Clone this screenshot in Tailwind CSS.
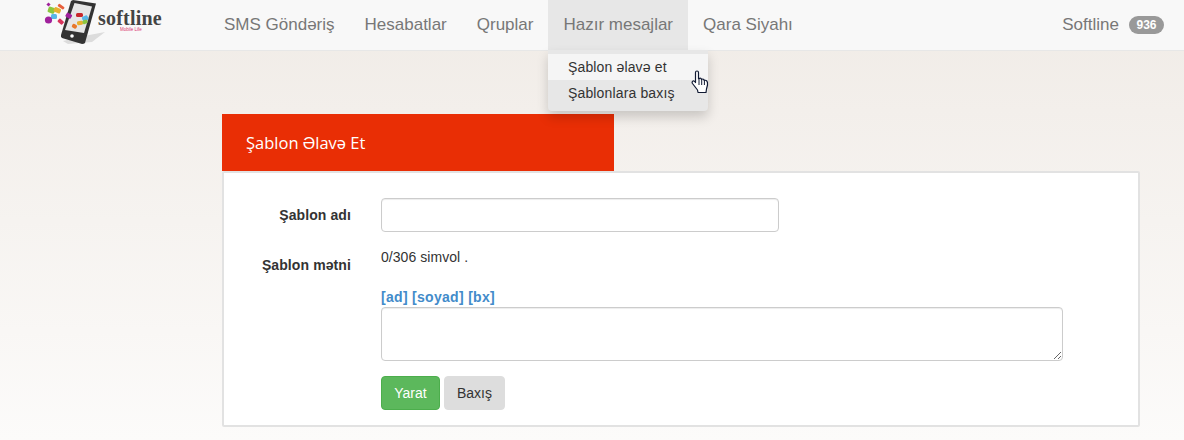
<!DOCTYPE html>
<html><head><meta charset="utf-8"><script src="https://cdn.jsdelivr.net/npm/@tailwindcss/browser@4"></script></head>
<body class="m-0 h-[440px] w-[1184px] overflow-hidden bg-gradient-to-b from-[#f0ebe6] to-[#fcfbfa] font-['Liberation_Sans',Arial,sans-serif] text-[14px] text-[#333]">
<nav class="relative z-10 flex h-[51px] items-stretch border-b border-[#e7e7e7] bg-[#f8f8f8] text-[17px] text-[#777]">
  <div class="relative w-[209px] shrink-0">
    <svg class="absolute left-[44px] top-0" width="62" height="46" viewBox="44 0 62 46">
      <path d="M63 41 L84 36 L105 32 L92 42 L68 44Z" fill="#dcdcdc"/>
      <path d="M73 0 L96 3.500 L85 43 Q84 44 82 44 L62 38 Q60.500 37 61 35 L71 1Z" fill="#333"/>
      <path d="M74.500 3 L92 6.500 L84 33 L65 30Z" fill="#e6e6e6"/>
      <circle cx="72" cy="36" r="1.800" fill="#fff"/>
      <rect x="48" y="7" width="7" height="6" rx="1.500" fill="#8cc63f" transform="rotate(20 51 10)"/>
      <rect x="54" y="8" width="7" height="5" rx="1.500" fill="#e8b030" transform="rotate(25 58 10)"/>
      <rect x="58" y="5" width="7" height="3" rx="1" fill="#e8603c" transform="rotate(35 61 6)"/>
      <rect x="51" y="14" width="6" height="5" rx="1.500" fill="#58b7e8"/>
      <circle cx="48.500" cy="20" r="3.600" fill="#a0219c"/>
      <rect x="58" y="19" width="6" height="4" rx="1" fill="#d8345c" transform="rotate(40 60 21)"/>
      <rect x="66" y="13" width="6" height="4.500" rx="1" fill="#a0219c" transform="rotate(30 68 15)"/>
      <rect x="47" y="3" width="3" height="3" fill="#a0219c" transform="rotate(45 48.500 4.500)"/>
      <rect x="76" y="13" width="7" height="4" rx="1.500" fill="#c8282c"/>
      <rect x="82" y="16" width="6" height="5" rx="1.500" fill="#58b7e8" transform="rotate(-25 85 18)"/>
      <rect x="77" y="21" width="6" height="4" rx="1.500" fill="#e8b030" transform="rotate(-10 80 23)"/>
      <rect x="83" y="20" width="5" height="4" rx="1.500" fill="#8cc63f" transform="rotate(-25 85 23)"/>
      <rect x="72" y="24" width="5" height="4" rx="1.500" fill="#e8782c" transform="rotate(30 74 26)"/>
    </svg>
    <span class="absolute left-[98px] top-[8px] font-['Liberation_Serif',serif] text-[20px] leading-[20px] font-bold tracking-[0.2px] text-[#444]">softline</span>
    <span class="absolute left-[120px] top-[27px] font-['Liberation_Sans',sans-serif] text-[4.500px] leading-[5px] text-[#d8346c]">Mobile Life</span>
  </div>
  <a class="flex items-center px-[15px]">SMS Göndəriş</a>
  <a class="flex items-center px-[15px]">Hesabatlar</a>
  <a class="flex items-center px-[15px]">Qruplar</a>
  <div class="relative">
    <a class="flex h-[50px] items-center bg-[#e7e7e7] px-[15px] text-[#777]">Hazır mesajlar</a>
    <div class="absolute left-0 top-[50px] flex h-[61px] w-[160px] flex-col rounded-b bg-[#e7e7e7] pt-[4px] text-[14px] tracking-[0.15px] text-[#333] shadow-[0_6px_12px_rgba(0,0,0,0.175)]">
      <a class="flex h-[26px] items-center bg-[#f5f5f5] pl-[19.500px]">Şablon əlavə et</a>
      <a class="flex h-[27px] items-center pl-[19.500px]">Şablonlara baxış</a>
      <svg class="absolute left-[143px] top-[20px]" width="19" height="25" viewBox="0 0 19 25">
        <path d="M4.500 2.500 Q4.500 1 6 1 Q7.500 1 7.500 2.500 L7.500 9 L8 9 Q9 7.800 10 8.500 L10.500 9.500 Q11.800 8.500 12.800 9.500 L13.200 10.500 Q14.800 9.800 15.800 11 Q16.800 12 16.500 15 L15.500 19 L15 22.500 L7 22.500 L6.500 20 L1.500 13.500 Q0.500 11.800 2 11 Q3 10.500 4.500 12.500Z" fill="#fff" stroke="#111a33" stroke-width="1.200" stroke-linejoin="round"/>
        <path d="M8 9.500 V15 M10.700 9.800 V15 M13.400 10.800 V15" stroke="#111a33" stroke-width="1" fill="none"/>
      </svg>
    </div>
  </div>
  <a class="flex items-center px-[15px]">Qara Siyahı</a>
  <div class="ml-auto flex items-center pr-[20px]">
    <span>Softline</span>
    <span class="ml-[10px] rounded-[10px] bg-[#999] px-[7.500px] py-[3px] text-[12px] leading-[12px] font-bold text-white">936</span>
  </div>
</nav>
<main class="ml-[222px] w-[918px] pt-[63px]">
  <div class="flex h-[57px] w-[392px] items-center bg-[#e92e05] pt-[1px] pl-[24px] font-['Open_Sans',sans-serif] text-[16.500px] text-white">Şablon Əlavə Et</div>
  <div class="h-[256px] rounded-[2px] border-2 border-[#e2e2e2] bg-white pt-[25px] pl-[157px]">
    <div class="flex items-center">
      <label class="-ml-[157px] w-[127px] text-right font-bold tracking-[0.1px]">Şablon adı</label>
      <input class="ml-[30px] h-[34px] w-[398px] rounded border border-[#ccc] bg-white shadow-[inset_0_1px_1px_rgba(0,0,0,0.075)]">
    </div>
    <div class="mt-[15px] flex">
      <label class="-ml-[157px] w-[127px] pt-[8px] text-right font-bold tracking-[0.1px]">Şablon mətni</label>
      <div class="ml-[30px]">
        <p class="h-[20px] leading-[20px] tracking-[0.05px]">0/306 simvol .</p>
        <p class="mt-[20px] h-[20px] leading-[20px] font-bold tracking-[0.3px] text-[#428bca]">[ad] [soyad] [bx]</p>
        <textarea class="block h-[54px] w-[682px] rounded border border-[#ccc] bg-white shadow-[inset_0_1px_1px_rgba(0,0,0,0.075)]"></textarea>
        <div class="mt-[15px] flex gap-[4px]">
          <button class="h-[34px] w-[59px] rounded border border-[#4cae4c] bg-[#5cb85c] text-white">Yarat</button>
          <button class="h-[34px] w-[61px] rounded border border-[#ddd] bg-[#ddd] text-[#333]">Baxış</button>
        </div>
      </div>
    </div>
  </div>
</main>
</body></html>
